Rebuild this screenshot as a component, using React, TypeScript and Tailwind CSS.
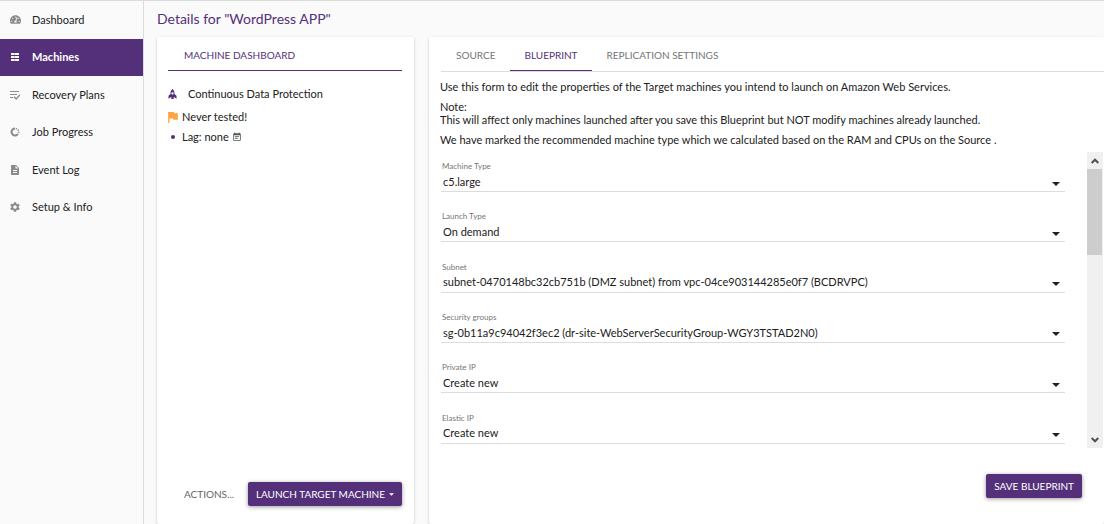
import React, { useId } from "react";
import { MdDescription, MdEventNote, MdSettings } from "react-icons/md";
import { FaTachometerAlt } from "react-icons/fa";

function ServerIcon() {
  return (
    <svg viewBox="0 0 10 10" className="size-[10px]" fill="currentColor" aria-hidden="true">
      <path d="M1 1h8v2H1zM1 4h8v2H1zM1 7h8v2H1z" />
      <path d="M4 1h1v8H4z" fill="#54307a" opacity=".3" />
    </svg>
  );
}

function PlanIcon() {
  return (
    <svg viewBox="0 0 10 10" className="size-[10px]" fill="none" stroke="currentColor" aria-hidden="true">
      <path d="M0 1.5h9M0 4.5h7M0 7.5h3" strokeWidth="1.2" />
      <path d="M4 6.800l2.200 2.200L9.800 5" strokeWidth="1.4" />
    </svg>
  );
}

function ProgressIcon() {
  return (
    <svg viewBox="0 0 10 10" className="size-[10px]" fill="none" stroke="currentColor" aria-hidden="true">
      <path d="M5 1.5a3.5 3.5 0 1 0 2.5 6" strokeWidth="2" />
      <path d="M5.8 1.5a3.5 3.5 0 0 1 2.8 4.2a3.5 3.5 0 0 1-1 1.8" strokeWidth="1.6" strokeDasharray="1.2 1" />
    </svg>
  );
}

function RocketIcon() {
  return (
    <svg viewBox="0 0 10 12" className="h-[10px] w-[9px] text-[#54307a]" fill="currentColor" aria-hidden="true">
      <path
        fillRule="evenodd"
        d="M5 0C6.800 1.400 7.600 3.600 7.400 6L9.800 8v3.600L7.200 10H6.400V12H3.600V10H2.800L.2 11.600V8l2.400-2C2.400 3.600 3.200 1.400 5 0zM5 3.800a1.400 1.400 0 1 0 0 2.800a1.400 1.400 0 1 0 0-2.800z"
      />
    </svg>
  );
}

function FlagIcon() {
  return (
    <svg viewBox="5 4 15 17" className="h-[11px] w-[10px] text-[#ffa340]" fill="currentColor" aria-hidden="true">
      <path d="M14.400 6L14 4H5v17h2v-7h5.600l.4 2h7V6z" />
    </svg>
  );
}

function Caret({ className }: { className: string }) {
  return (
    <svg viewBox="0 0 10 5" className={className} fill="currentColor" aria-hidden="true">
      <path d="M0 0h10L5 5z" />
    </svg>
  );
}

function Chevron({ flip = false }: { flip?: boolean }) {
  return (
    <svg viewBox="0 0 8 6" className={flip ? "h-[6px] w-2 rotate-180" : "h-[6px] w-2"} fill="none" stroke="#505050" strokeWidth="2" aria-hidden="true">
      <path d="M.7 5L4 1.700 7.300 5" />
    </svg>
  );
}

const navItems = [
  { label: "Dashboard", icon: <FaTachometerAlt size={11} /> },
  { label: "Machines", icon: <ServerIcon />, active: true },
  { label: "Recovery Plans", icon: <PlanIcon /> },
  { label: "Job Progress", icon: <ProgressIcon /> },
  { label: "Event Log", icon: <MdDescription size={12} /> },
  { label: "Setup & Info", icon: <MdSettings size={12} /> },
];

const fields = [
  { label: "Machine Type", value: "c5.large" },
  { label: "Launch Type", value: "On demand" },
  { label: "Subnet", value: "subnet-0470148bc32cb751b (DMZ subnet) from vpc-04ce903144285e0f7 (BCDRVPC)" },
  { label: "Security groups", value: "sg-0b11a9c94042f3ec2 (dr-site-WebServerSecurityGroup-WGY3TSTAD2N0)" },
  { label: "Private IP", value: "Create new" },
  { label: "Elastic IP", value: "Create new" },
];

function SelectField({ label, value }: { label: string; value: string }) {
  const id = useId();
  return (
    <div>
      <label htmlFor={id} className="block pl-px text-[8px] leading-[14px] text-[#757575]">
        {label}
      </label>
      <div className="grid items-center border-b border-[#dcdcdc]">
        <select id={id} defaultValue={value} className="col-start-1 row-start-1 h-[18px] w-full appearance-none bg-transparent pr-6 pl-[2px] text-[11px] text-[#212121] outline-none">
          <option>{value}</option>
        </select>
        <Caret className="pointer-events-none col-start-1 row-start-1 mt-[3px] mr-[5px] h-1 w-2 justify-self-end" />
      </div>
    </div>
  );
}

const raised = "rounded-xs bg-[#54307a] text-[10px] text-white shadow-[0_1px_4px_rgba(0,0,0,0.4)]";
const card = "flex flex-col rounded-xs bg-white shadow-[0_1px_3px_rgba(0,0,0,0.22)]";

export default function App() {
  return (
    <div className="flex min-h-screen overflow-hidden border-t border-[#dcdcdc] bg-[#fafafa] font-['Lato',sans-serif] text-[11px] text-[#212121]">
      <nav className="w-36 shrink-0 border-r border-[#dcdcdc]">
        <ul className="grid h-[225px] grid-rows-6">
          {navItems.map((item) => (
            <li key={item.label} className="grid">
              <a
                href="#"
                className={
                  item.active
                    ? "flex items-center bg-[#54307a] pl-2 font-bold text-white"
                    : "flex items-center pl-2"
                }
              >
                <span className={item.active ? "mr-[10px] flex w-[14px] justify-center" : "mr-[10px] flex w-[14px] justify-center text-[#8a8a8a]"}>
                  {item.icon}
                </span>
                {item.label}
              </a>
            </li>
          ))}
        </ul>
      </nav>

      <main className="flex min-w-0 flex-1 flex-col pl-[13px]">
        <h1 className="h-9 text-[14px] leading-9 text-[#54307a]">Details for "WordPress APP"</h1>
        <div className="flex flex-1 gap-[15px]">
          <section className={`${card} w-[257px] shrink-0 pr-3 pl-[11px]`}>
            <h2 className="h-[34px] border-b border-[#54307a] pl-4 text-[10px] leading-9 text-[#54307a]">MACHINE DASHBOARD</h2>
            <ul className="mt-[11px]">
              <li className="flex h-6 items-center">
                <span className="flex w-5"><RocketIcon /></span>
                Continuous Data Protection
              </li>
              <li className="flex h-[22px] items-center gap-1">
                <FlagIcon />
                Never tested!
              </li>
              <li className="flex h-[18px] items-center">
                <span className="mr-[7px] ml-[3px] size-1 rounded-full bg-[#54307a]" />
                Lag: none
                <MdEventNote size={10} className="ml-[3px] text-[#555]" />
              </li>
            </ul>
            <div className="mt-auto flex items-center justify-between pb-[18px]">
              <button className="ml-4 text-[10px] text-[#666]">ACTIONS...</button>
              <button className={`${raised} flex h-6 items-center gap-1 px-2`}>
                LAUNCH TARGET MACHINE
                <Caret className="h-[3px] w-[5px]" />
              </button>
            </div>
          </section>

          <section className={`${card} min-w-0 flex-1 pl-[11px]`}>
            <div role="tablist" className="ml-px flex h-[35px] shrink-0 border-b border-[#dcdcdc] text-[10px] text-[#757575]">
              <button role="tab" aria-selected="false" className="px-[15px] pt-[3px]">SOURCE</button>
              <button role="tab" aria-selected="true" className="border-b border-[#54307a] px-[14px] pt-[3px] text-[#54307a]">BLUEPRINT</button>
              <button role="tab" aria-selected="false" className="px-[15px] pt-[3px]">REPLICATION SETTINGS</button>
            </div>
            <div className="space-y-[7px] pt-2 leading-[13px]">
              <p>Use this form to edit the properties of the Target machines you intend to launch on Amazon Web Services.</p>
              <p>Note:<br />This will affect only machines launched after you save this Blueprint but NOT modify machines already launched.</p>
              <p>We have marked the recommended machine type which we calculated based on the RAM and CPUs on the Source .</p>
            </div>
            <div className="mt-[6px] ml-px flex h-[296px] pr-[1px]">
              <div className="min-w-0 flex-1 overflow-y-auto pt-[7px] [scrollbar-width:none]">
                <div className="mr-[22px] grid h-[302px] grid-rows-6">
                  {fields.map((f) => (
                    <SelectField key={f.label} {...f} />
                  ))}
                </div>
              </div>
              <div className="flex w-4 flex-col bg-[#f0f0f0]">
                <button aria-label="Scroll up" className="flex h-[17px] items-center justify-center"><Chevron /></button>
                <div className="mr-px h-[86px] bg-[#cdcdcd]" />
                <button aria-label="Scroll down" className="mt-auto flex h-[17px] items-center justify-center"><Chevron flip /></button>
              </div>
            </div>
            <div className="mt-auto flex justify-end pr-[22px] pb-[26px]">
              <button className={`${raised} h-6 px-2`}>SAVE BLUEPRINT</button>
            </div>
          </section>
        </div>
      </main>
    </div>
  );
}
